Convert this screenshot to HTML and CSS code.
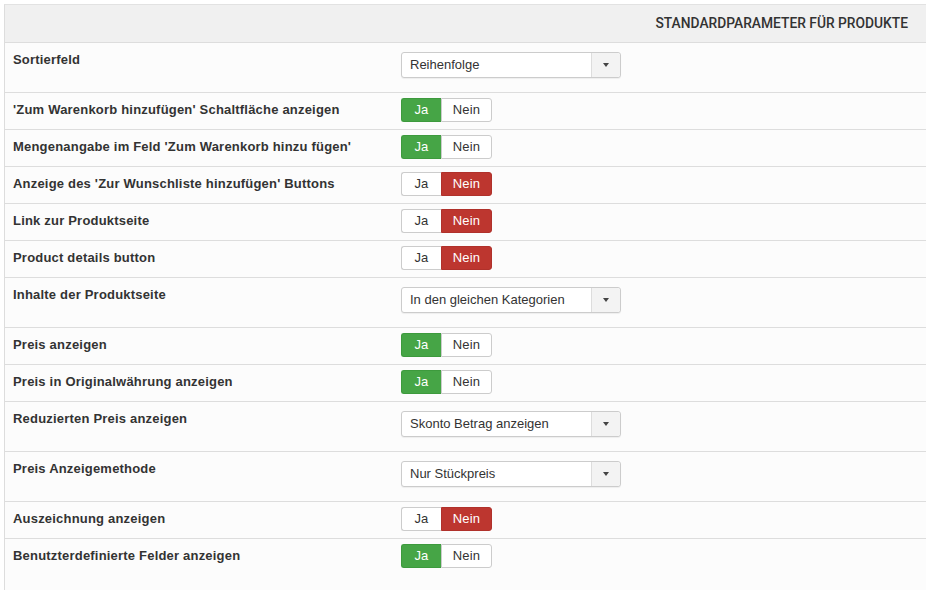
FILE: index.html
```html
<!DOCTYPE html>
<html lang="de">
<head>
  <meta charset="UTF-8" />
  <title>Standardparameter für Produkte</title>
  <link rel="stylesheet" href="styles.css">
</head>
<body>
  <div class="params">
    <div class="params-head">STANDARDPARAMETER FÜR PRODUKTE</div>

    <div class="row sel">
      <div class="label">Sortierfeld</div>
      <div class="ctrl"><div class="select"><span class="value">Reihenfolge</span><span class="arrow"></span></div></div>
    </div>
    <div class="row">
      <div class="label">'Zum Warenkorb hinzufügen' Schaltfläche anzeigen</div>
      <div class="ctrl"><div class="toggle"><span class="ja on">Ja</span><span class="nein">Nein</span></div></div>
    </div>
    <div class="row">
      <div class="label">Mengenangabe im Feld 'Zum Warenkorb hinzu fügen'</div>
      <div class="ctrl"><div class="toggle"><span class="ja on">Ja</span><span class="nein">Nein</span></div></div>
    </div>
    <div class="row">
      <div class="label">Anzeige des 'Zur Wunschliste hinzufügen' Buttons</div>
      <div class="ctrl"><div class="toggle"><span class="ja">Ja</span><span class="nein on">Nein</span></div></div>
    </div>
    <div class="row">
      <div class="label">Link zur Produktseite</div>
      <div class="ctrl"><div class="toggle"><span class="ja">Ja</span><span class="nein on">Nein</span></div></div>
    </div>
    <div class="row">
      <div class="label">Product details button</div>
      <div class="ctrl"><div class="toggle"><span class="ja">Ja</span><span class="nein on">Nein</span></div></div>
    </div>
    <div class="row sel">
      <div class="label">Inhalte der Produktseite</div>
      <div class="ctrl"><div class="select"><span class="value">In den gleichen Kategorien</span><span class="arrow"></span></div></div>
    </div>
    <div class="row">
      <div class="label">Preis anzeigen</div>
      <div class="ctrl"><div class="toggle"><span class="ja on">Ja</span><span class="nein">Nein</span></div></div>
    </div>
    <div class="row">
      <div class="label">Preis in Originalwährung anzeigen</div>
      <div class="ctrl"><div class="toggle"><span class="ja on">Ja</span><span class="nein">Nein</span></div></div>
    </div>
    <div class="row sel">
      <div class="label">Reduzierten Preis anzeigen</div>
      <div class="ctrl"><div class="select"><span class="value">Skonto Betrag anzeigen</span><span class="arrow"></span></div></div>
    </div>
    <div class="row sel">
      <div class="label">Preis Anzeigemethode</div>
      <div class="ctrl"><div class="select"><span class="value">Nur Stückpreis</span><span class="arrow"></span></div></div>
    </div>
    <div class="row">
      <div class="label">Auszeichnung anzeigen</div>
      <div class="ctrl"><div class="toggle"><span class="ja">Ja</span><span class="nein on">Nein</span></div></div>
    </div>
    <div class="row last">
      <div class="label">Benutzterdefinierte Felder anzeigen</div>
      <div class="ctrl"><div class="toggle"><span class="ja on">Ja</span><span class="nein">Nein</span></div></div>
    </div>
  </div>
</body>
</html>
```

FILE: styles.css
```css
body {
  margin: 0;
  padding: 4px 0 0 4px;
  background-color: white;
  font-family: "Liberation Sans", Arial, sans-serif;
  font-size: 13px;
  letter-spacing: 0.2px;
  color: #333;
}

.params {
  border-left: 1px solid #ddd;
  border-top: 1px solid #e2e2e2;
  background-color: #fcfcfc;
}

.params-head {
  height: 37px;
  line-height: 37px;
  background-color: #f0f0f0;
  text-align: right;
  padding-right: 18px;
  font-family: Roboto, "Liberation Sans", sans-serif;
  font-size: 13.8px;
  font-weight: 500;
  letter-spacing: 0;
  color: #333;
  border-bottom: 1px solid #ddd;
}

.row {
  display: flex;
  height: 36px;
  border-bottom: 1px solid #ddd;
}

.row.sel {
  height: 49px;
}

.row.last {
  border-bottom: none;
  height: 51px;
}

.label {
  width: 388px;
  padding: 10px 0 0 8px;
  font-weight: bold;
  line-height: 14px;
}

.ctrl {
  padding-top: 5px;
}

.row.sel .ctrl {
  padding-top: 9px;
}

.select {
  display: flex;
  width: 218px;
  height: 24px;
  border: 1px solid #ccc;
  border-radius: 3px;
  background-color: white;
  box-shadow: 0 1px 1px rgba(0, 0, 0, 0.06);
}

.select .value {
  flex: 1;
  padding-left: 8px;
  line-height: 24px;
  letter-spacing: 0;
}

.select .arrow {
  width: 28px;
  border-left: 1px solid #ddd;
  background-color: #f3f3f3;
  border-radius: 0 3px 3px 0;
  position: relative;
}

.select .arrow::after {
  content: "";
  position: absolute;
  left: 11px;
  top: 10px;
  border-left: 3.5px solid transparent;
  border-right: 3.5px solid transparent;
  border-top: 4px solid #444;
}

.toggle {
  display: flex;
  height: 24px;
}

.toggle span {
  line-height: 22px;
  text-align: center;
  border: 1px solid #ccc;
  background-color: white;
  color: #333;
}

.toggle .ja {
  width: 39px;
  border-radius: 3px 0 0 3px;
  border-right: none;
}

.toggle .nein {
  width: 49px;
  border-radius: 0 3px 3px 0;
}

.toggle .ja.on {
  background-color: #46a546;
  border-color: #3d9a3d;
  color: white;
}

.toggle .nein.on {
  background-color: #bd362f;
  border-color: #b0312b;
  color: white;
}
```
